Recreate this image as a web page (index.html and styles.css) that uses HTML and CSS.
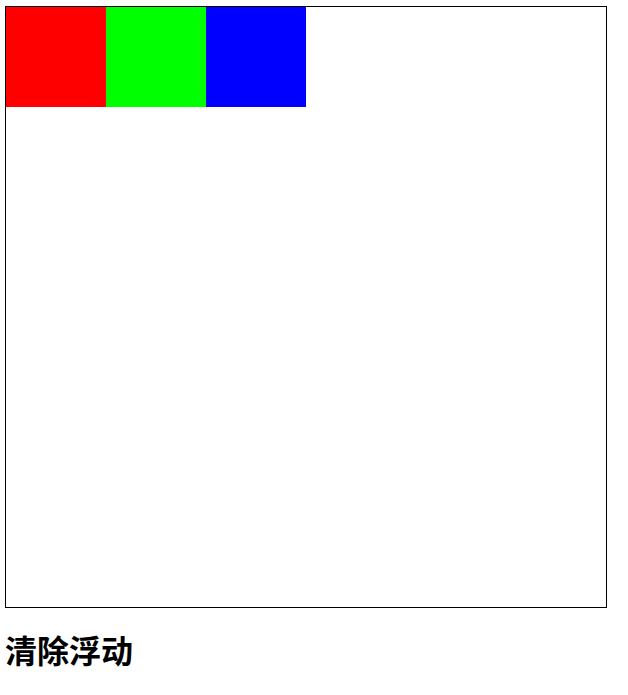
FILE: index.html
```html
<!DOCTYPE html>
<html>
<head>
<meta charset="utf-8">
<link rel="stylesheet" href="styles.css">
</head>
<body>
<div class="box">
  <div class="item red"></div>
  <div class="item green"></div>
  <div class="item blue"></div>
</div>
<h1 class="title">清除浮动</h1>
</body>
</html>
```
FILE: styles.css
```css
body {
  margin: 0;
  padding: 6px 5px 0;
  font-family: "Noto Sans CJK SC", "Noto Sans", sans-serif;
}
.box {
  width: 600px;
  height: 600px;
  border: 1px solid #000;
}
.item {
  float: left;
  width: 100px;
  height: 100px;
}
.red { background: #f00; }
.green { background: #0f0; }
.blue { background: #00f; }
.title {
  font-size: 32px;
  font-weight: bold;
  margin: 18px 0 0 0;
}
```
